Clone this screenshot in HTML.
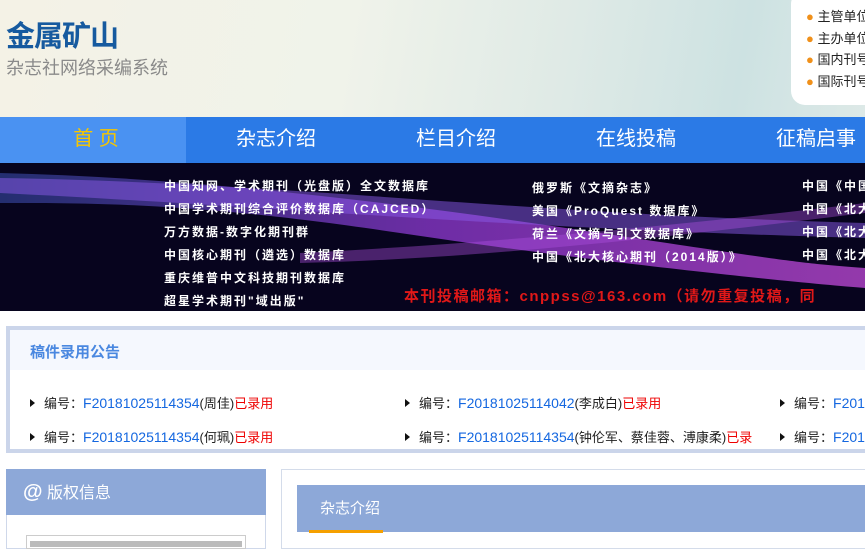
<!DOCTYPE html>
<html><head><meta charset="utf-8"><style>
*{margin:0;padding:0;box-sizing:border-box}
body{width:865px;height:545px;overflow:hidden;background:#fff;font-family:"Liberation Sans","Noto Sans CJK SC",sans-serif;position:relative}
.a{position:absolute;white-space:nowrap}
#hd{position:absolute;left:0;top:0;width:865px;height:117px;background:linear-gradient(100deg,#f4f2e6 0%,#f0f3ea 40%,#dfeae6 65%,#cde2e2 85%,#dde9e7 100%)}
#nav{position:absolute;left:0;top:117px;width:865px;height:46px;background:#2b7ae6}
#nav div{position:absolute;top:0;height:46px;line-height:44px;width:180px;text-align:center;color:#fff;font-size:20px}
#bn{position:absolute;left:0;top:163px;width:865px;height:148px;background:#07041e;overflow:hidden}
.w{color:#fff;font-size:12px;letter-spacing:2px;font-weight:bold}
.ann{position:absolute;left:6px;top:326px;width:870px;height:127px;border:4px solid #cbd5ea;border-right:none}
.r{font-size:13px;color:#222}
.r b{font-weight:normal;color:#1467e0;font-size:14px}
.r i{font-style:normal;color:#e00}
.tri{display:inline-block;width:0;height:0;border-left:5px solid #111;border-top:4px solid transparent;border-bottom:4px solid transparent;margin-right:9px;vertical-align:1px}
</style></head><body>
<div id="hd"></div>
<div class="a" style="left:6px;top:13px;font-size:29px;font-weight:bold;color:#165a9f;letter-spacing:-1px">金属矿山</div>
<div class="a" style="left:6px;top:54px;font-size:18px;color:#8a8a8a">杂志社网络采编系统</div>
<div class="a" style="left:791px;top:-10px;width:90px;height:115px;background:#fff;border-radius:14px"></div>
<div class="a" style="left:806px;top:6px;font-size:13px;color:#222;line-height:21.7px">
<div><span style="color:#f0901a">●</span> 主管单位</div><div><span style="color:#f0901a">●</span> 主办单位</div><div><span style="color:#f0901a">●</span> 国内刊号</div><div><span style="color:#f0901a">●</span> 国际刊号</div></div>
<div id="nav">
<div style="left:0;width:6px;background:#4a92f2"></div>
<div style="left:6px;background:#4a92f2;color:#f6c600">首 页</div>
<div style="left:186px">杂志介绍</div><div style="left:366px">栏目介绍</div><div style="left:546px">在线投稿</div><div style="left:726px">征稿启事</div>
</div>
<div id="bn">
<svg width="865" height="148" style="position:absolute;left:0;top:0">
<defs><linearGradient id="g" x1="0" x2="1"><stop offset="0" stop-color="#3a4fb0" stop-opacity=".8"/><stop offset=".5" stop-color="#9a3ee0"/><stop offset="1" stop-color="#d050e8"/></linearGradient></defs>
<path d="M0 10 C200 15 400 40 600 70 S800 100 865 105 L865 125 C800 120 600 100 400 70 S100 40 0 40Z" fill="url(#g)" opacity=".7"/>
<path d="M0 15 C300 20 500 50 865 60 L865 75 C500 65 300 45 0 30Z" fill="#8a5ae8" opacity=".5"/>
<path d="M300 90 C500 80 700 60 865 40 L865 50 C700 70 500 95 300 100Z" fill="#b050e0" opacity=".4"/>
</svg>
<div class="a w" style="left:164px;top:12px;line-height:23px">中国知网、学术期刊（光盘版）全文数据库<br>中国学术期刊综合评价数据库（CAJCED）<br>万方数据-数字化期刊群<br>中国核心期刊（遴选）数据库<br>重庆维普中文科技期刊数据库<br>超星学术期刊"域出版"</div>
<div class="a w" style="left:532px;top:14px;line-height:23px">俄罗斯《文摘杂志》<br>美国《ProQuest 数据库》<br>荷兰《文摘与引文数据库》<br>中国《北大核心期刊（2014版）》</div>
<div class="a w" style="left:802px;top:12px;line-height:23px">中国《中国<br>中国《北大<br>中国《北大<br>中国《北大</div>
<div class="a" style="left:404px;top:122px;font-size:15px;font-weight:bold;color:#e01818;letter-spacing:1.5px">本刊投稿邮箱：cnppss@163.com（请勿重复投稿，同</div>
</div>
<div class="ann"><div style="height:40px;background:#f5f8fe"></div></div>
<div class="a" style="left:30px;top:341px;font-size:15px;font-weight:bold;color:#4a88e0">稿件录用公告</div>
<div class="a r" style="left:30px;top:393px"><span class="tri"></span>编号：<b>F20181025114354</b>(周佳)<i>已录用</i></div>
<div class="a r" style="left:405px;top:393px"><span class="tri"></span>编号：<b>F20181025114042</b>(李成白)<i>已录用</i></div>
<div class="a r" style="left:780px;top:393px"><span class="tri"></span>编号：<b>F2018</b></div>
<div class="a r" style="left:30px;top:427px"><span class="tri"></span>编号：<b>F20181025114354</b>(何珮)<i>已录用</i></div>
<div class="a r" style="left:405px;top:427px;width:370px;overflow:hidden"><span class="tri"></span>编号：<b>F20181025114354</b>(钟伦军、蔡佳蓉、溥康柔)<i>已录</i></div>
<div class="a r" style="left:780px;top:427px;background:#fff"><span class="tri"></span>编号：<b>F2018</b></div>
<div class="a" style="left:6px;top:469px;width:260px;height:80px;border:1px solid #cfd8ea"></div>
<div class="a" style="left:6px;top:469px;width:260px;height:46px;background:#8da8d8;color:#fff;font-size:16px;line-height:46px;padding-left:17px"><span style="font-size:20px;font-weight:bold">@</span> 版权信息</div>
<div class="a" style="left:26px;top:535px;width:220px;height:14px;border:1px solid #ccc"><div style="margin:5px 3px 0;height:6px;background:#bbb"></div></div>
<div class="a" style="left:281px;top:469px;width:600px;height:80px;border:1px solid #d4dcea"></div>
<div class="a" style="left:297px;top:485px;width:580px;height:47px;background:#8da8d8;color:#fff;font-size:15px;line-height:47px;padding-left:23px">杂志介绍</div>
<div class="a" style="left:309px;top:530px;width:74px;height:3px;background:#f5a000"></div>
</body></html>
